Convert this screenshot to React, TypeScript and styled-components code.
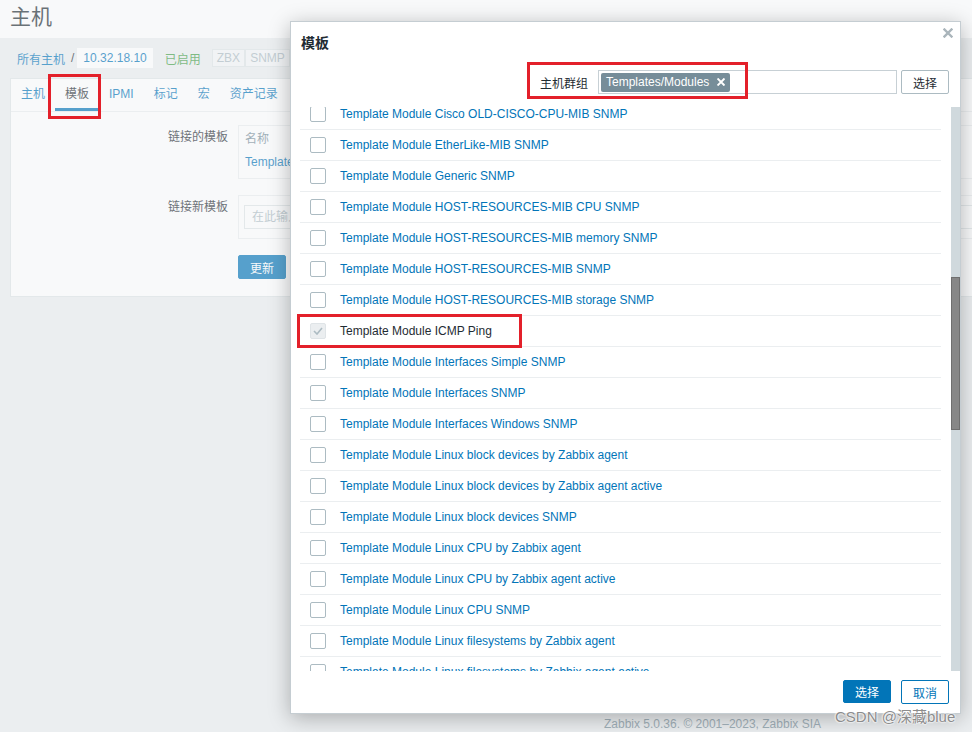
import React from 'react';
import styled, { createGlobalStyle } from 'styled-components';

const GlobalStyle = createGlobalStyle`
  html, body {
    margin: 0;
    padding: 0;
  }
  body {
    background: #ebeef0;
    font-family: 'Liberation Sans', Arial, 'Noto Sans CJK SC', sans-serif;
    font-size: 12px;
    color: #1f2c33;
  }
  * {
    box-sizing: border-box;
  }
`;

interface TemplateRow {
  name: string;
  linked?: boolean;
}

const visibleRows: TemplateRow[] = [
  { name: 'Template Module Cisco OLD-CISCO-CPU-MIB SNMP' },
  { name: 'Template Module EtherLike-MIB SNMP' },
  { name: 'Template Module Generic SNMP' },
  { name: 'Template Module HOST-RESOURCES-MIB CPU SNMP' },
  { name: 'Template Module HOST-RESOURCES-MIB memory SNMP' },
  { name: 'Template Module HOST-RESOURCES-MIB SNMP' },
  { name: 'Template Module HOST-RESOURCES-MIB storage SNMP' },
  { name: 'Template Module ICMP Ping', linked: true },
  { name: 'Template Module Interfaces Simple SNMP' },
  { name: 'Template Module Interfaces SNMP' },
  { name: 'Template Module Interfaces Windows SNMP' },
  { name: 'Template Module Linux block devices by Zabbix agent' },
  { name: 'Template Module Linux block devices by Zabbix agent active' },
  { name: 'Template Module Linux block devices SNMP' },
  { name: 'Template Module Linux CPU by Zabbix agent' },
  { name: 'Template Module Linux CPU by Zabbix agent active' },
  { name: 'Template Module Linux CPU SNMP' },
  { name: 'Template Module Linux filesystems by Zabbix agent' },
  { name: 'Template Module Linux filesystems by Zabbix agent active' },
];

// scroll state of the template list
const ROW_H = 31;
const HEADER_H = 28;
const TOTAL_ROWS = 66;
const ROWS_ABOVE = 19;
const PEEK = 8; // part of the first visible row scrolled away
const VIEW_H = 564;

const contentH = HEADER_H + TOTAL_ROWS * ROW_H;
const thumbH = (VIEW_H * VIEW_H) / contentH;
const thumbTop = ((HEADER_H + ROWS_ABOVE * ROW_H + PEEK) * VIEW_H) / contentH;

/* ---------- page behind the dialog ---------- */

const Page = styled.div`
  position: relative;
  width: 972px;
  height: 732px;
  overflow: hidden;
  display: flex;
  flex-direction: column;
`;

const Header = styled.header`
  background: #fff;
  height: 38px;
  padding: 5px 10px 0;
`;

const Title = styled.h1`
  margin: 0;
  font-size: 21px;
  line-height: 24px;
  font-weight: normal;
  color: #1f2c33;
`;

const NavRow = styled.div`
  height: 40px;
  display: flex;
  align-items: center;
  padding-left: 17px;
`;

const Crumb = styled.span`
  color: #0275b8;
`;

const CrumbSep = styled.span`
  margin: 0 3px 0 6px;
  color: #1f2c33;
`;

const CurrentHost = styled.span`
  background: #fff;
  height: 20px;
  line-height: 20px;
  padding: 0 6px;
  color: #0275b8;
`;

const Status = styled.span`
  margin-left: 12px;
  color: #429e47;
`;

const Badges = styled.div`
  display: flex;
  margin-left: 11px;
`;

const Badge = styled.span`
  height: 18px;
  line-height: 16px;
  padding: 0 4px;
  border: 1px solid #dfe4e7;
  color: #acbbc2;
  background: #f4f6f7;
`;

const Panel = styled.section`
  background: #fff;
  border: 1px solid #dfe4e7;
  margin: 0 -40px 0 10px;
`;

const TabBar = styled.nav`
  display: flex;
  border-bottom: 1px solid #ebeef0;
`;

const Tab = styled.span<{ $active?: boolean }>`
  padding: 1px 10px 0;
  line-height: 28px;
  border-bottom: 3px solid ${(p) => (p.$active ? '#0275b8' : 'transparent')};
  color: ${(p) => (p.$active ? '#1f2c33' : '#0275b8')};
`;

const Form = styled.div`
  display: grid;
  grid-template-columns: 217px 1fr;
  column-gap: 10px;
  row-gap: 16px;
  padding: 13px 0 17px;
`;

const Label = styled.label`
  text-align: right;
  padding-top: 5px;
  line-height: 14px;
`;

const LinkedBox = styled.div`
  border: 1px solid #ebeef0;
  padding: 5px 6px 8px;
`;

const ColHead = styled.div`
  line-height: 16px;
  padding-bottom: 7px;
  color: #768d99;
`;

const LinkText = styled.div`
  line-height: 16px;
  color: #0275b8;
`;

const NewBox = styled.div`
  border: 1px solid #ebeef0;
  padding: 9px 5px;
`;

const SearchInput = styled.div`
  height: 24px;
  line-height: 22px;
  border: 1px solid #dfe4e7;
  padding: 0 7px;
  color: #acbbc2;
`;

const ButtonCell = styled.div`
  grid-column: 2;
`;

const PrimaryButton = styled.button`
  height: 24px;
  padding: 0 11px;
  border: 1px solid #0275b8;
  border-radius: 2px;
  background: #0275b8;
  color: #fff;
  font: inherit;
`;

const Footer = styled.footer`
  margin-top: auto;
  padding-left: 604px;
  line-height: 16px;
  color: #768d99;
`;

const Dim = styled.div`
  position: absolute;
  inset: 0;
  background: rgba(235, 238, 240, 0.36);
`;

/* ---------- dialog ---------- */

const Dialog = styled.div`
  position: absolute;
  left: 290px;
  top: 21px;
  width: 671px;
  height: 693px;
  display: flex;
  flex-direction: column;
  background: #fff;
  border: 1px solid #c5cdd2;
  box-shadow: 0 4px 20px 0 rgba(0, 0, 0, 0.28);
`;

const DialogTitle = styled.h4`
  margin: 0;
  padding: 13px 10px 0;
  font-size: 14px;
  line-height: 16px;
  font-weight: bold;
  color: #1f2c33;
`;

const CloseButton = styled.span`
  position: absolute;
  top: 6px;
  right: 7px;
  display: flex;
`;

const FilterRow = styled.div`
  margin-top: 19px;
  height: 24px;
  display: flex;
  align-items: center;
  justify-content: flex-end;
  padding-right: 11px;
`;

const FilterLabel = styled.span`
  margin-right: 10px;
`;

const MultiSelect = styled.div`
  width: 299px;
  height: 24px;
  border: 1px solid #c7d0d5;
  padding: 2px;
  display: flex;
  align-items: center;
`;

const Chip = styled.span`
  height: 19px;
  display: inline-flex;
  align-items: center;
  gap: 8px;
  padding: 0 5px;
  border-radius: 2px;
  background: #768d99;
  color: #fff;
`;

const OutlineButton = styled.button<{ $blue?: boolean }>`
  height: 24px;
  margin-left: ${(p) => (p.$blue ? '10px' : '4px')};
  padding: 0 ${(p) => (p.$blue ? '11px' : '11px')};
  border: 1px solid ${(p) => (p.$blue ? '#0275b8' : '#acbbc2')};
  border-radius: 2px;
  background: #fff;
  color: ${(p) => (p.$blue ? '#0275b8' : '#1f2c33')};
  font: inherit;
`;

const ListWrap = styled.div`
  margin-top: 13px;
  height: ${VIEW_H}px;
  display: flex;
  padding-left: 9px;
`;

const Viewport = styled.div`
  flex: 1;
  margin-right: 10px;
  overflow: hidden;
`;

const Rows = styled.ul`
  list-style: none;
  margin: -${PEEK}px 0 0;
  padding: 0;
`;

const Row = styled.li`
  height: ${ROW_H}px;
  display: flex;
  align-items: center;
  padding-left: 10px;
  border-bottom: 1px solid #ebeef0;
`;

const Check = styled.span<{ $checked?: boolean }>`
  width: 16px;
  height: 16px;
  margin-right: 14px;
  border: 1px solid ${(p) => (p.$checked ? '#dfe4e7' : '#acbbc2')};
  border-radius: 2px;
  background: ${(p) => (p.$checked ? '#ebeef0' : '#fff')};
  display: flex;
  align-items: center;
  justify-content: center;
`;

const RowName = styled.span<{ $linked?: boolean }>`
  color: ${(p) => (p.$linked ? '#1f2c33' : '#0275b8')};
  white-space: nowrap;
`;

const Track = styled.div`
  width: 9px;
  background: #d0d9dd;
`;

const Thumb = styled.div`
  width: 9px;
  background: #878787;
  border: 1px solid #6f6f6f;
`;

const DialogFooter = styled.div`
  display: flex;
  justify-content: flex-end;
  padding: 9px 11px 10px;
`;

const DialogPrimary = styled(PrimaryButton)`
  height: 23px;
`;

/* ---------- screenshot annotations ---------- */

const Mark = styled.div<{ $x: number; $y: number; $w: number; $h: number }>`
  position: absolute;
  left: ${(p) => p.$x}px;
  top: ${(p) => p.$y}px;
  width: ${(p) => p.$w}px;
  height: ${(p) => p.$h}px;
  border: 3px solid #e3202a;
`;

const Watermark = styled.div`
  position: absolute;
  left: 835px;
  top: 707px;
  font-size: 15px;
  line-height: 20px;
  color: #8c8c8c;
  text-shadow: 0 0 2px #fff, 0 0 2px #fff, 0 0 2px #fff;
`;

const CrossIcon = ({ size, color }: { size: number; color: string }) => (
  <svg width={size} height={size} viewBox="0 0 10 10">
    <path d="M1.5 1.5 L8.5 8.5 M8.5 1.5 L1.5 8.5" stroke={color} strokeWidth="2.4" strokeLinecap="square" />
  </svg>
);

const TickIcon = () => (
  <svg width="10" height="8" viewBox="0 0 10 8">
    <path d="M1 4 L4 7 L9 1" stroke="#acbbc2" strokeWidth="1.6" fill="none" />
  </svg>
);

const App = () => {
  return (
    <>
      <GlobalStyle />
      <Page>
        <Header>
          <Title>主机</Title>
        </Header>
        <NavRow>
          <Crumb>所有主机</Crumb>
          <CrumbSep>/</CrumbSep>
          <CurrentHost>10.32.18.10</CurrentHost>
          <Status>已启用</Status>
          <Badges>
            <Badge>ZBX</Badge>
            <Badge>SNMP</Badge>
            <Badge>JMX</Badge>
            <Badge>IPMI</Badge>
          </Badges>
        </NavRow>
        <Panel>
          <TabBar>
            <Tab>主机</Tab>
            <Tab $active>模板</Tab>
            <Tab>IPMI</Tab>
            <Tab>标记</Tab>
            <Tab>宏</Tab>
            <Tab>资产记录</Tab>
            <Tab>加密</Tab>
          </TabBar>
          <Form>
            <Label>链接的模板</Label>
            <LinkedBox>
              <ColHead>名称</ColHead>
              <LinkText>Template Module ICMP Ping</LinkText>
            </LinkedBox>
            <Label>链接新模板</Label>
            <NewBox>
              <SearchInput>在此输入搜索</SearchInput>
            </NewBox>
            <ButtonCell>
              <PrimaryButton>更新</PrimaryButton>
            </ButtonCell>
          </Form>
        </Panel>
        <Footer>Zabbix 5.0.36. © 2001–2023, Zabbix SIA</Footer>

        <Dim />

        <Dialog>
          <DialogTitle>模板</DialogTitle>
          <CloseButton>
            <CrossIcon size={10} color="#aab5bb" />
          </CloseButton>
          <FilterRow>
            <FilterLabel>主机群组</FilterLabel>
            <MultiSelect>
              <Chip>
                Templates/Modules
                <CrossIcon size={8} color="#fff" />
              </Chip>
            </MultiSelect>
            <OutlineButton>选择</OutlineButton>
          </FilterRow>
          <ListWrap>
            <Viewport>
              <Rows>
                {visibleRows.map((row) => (
                  <Row key={row.name}>
                    <Check $checked={row.linked}>{row.linked && <TickIcon />}</Check>
                    <RowName $linked={row.linked}>{row.name}</RowName>
                  </Row>
                ))}
              </Rows>
            </Viewport>
            <Track>
              <Thumb style={{ marginTop: thumbTop, height: thumbH }} />
            </Track>
          </ListWrap>
          <DialogFooter>
            <DialogPrimary>选择</DialogPrimary>
            <OutlineButton $blue>取消</OutlineButton>
          </DialogFooter>
        </Dialog>

        <Mark $x={48} $y={74} $w={53} $h={45} />
        <Mark $x={527} $y={62} $w={221} $h={37} />
        <Mark $x={297} $y={314} $w={225} $h={34} />
        <Watermark>CSDN @深藏blue</Watermark>
      </Page>
    </>
  );
};

export default App;
